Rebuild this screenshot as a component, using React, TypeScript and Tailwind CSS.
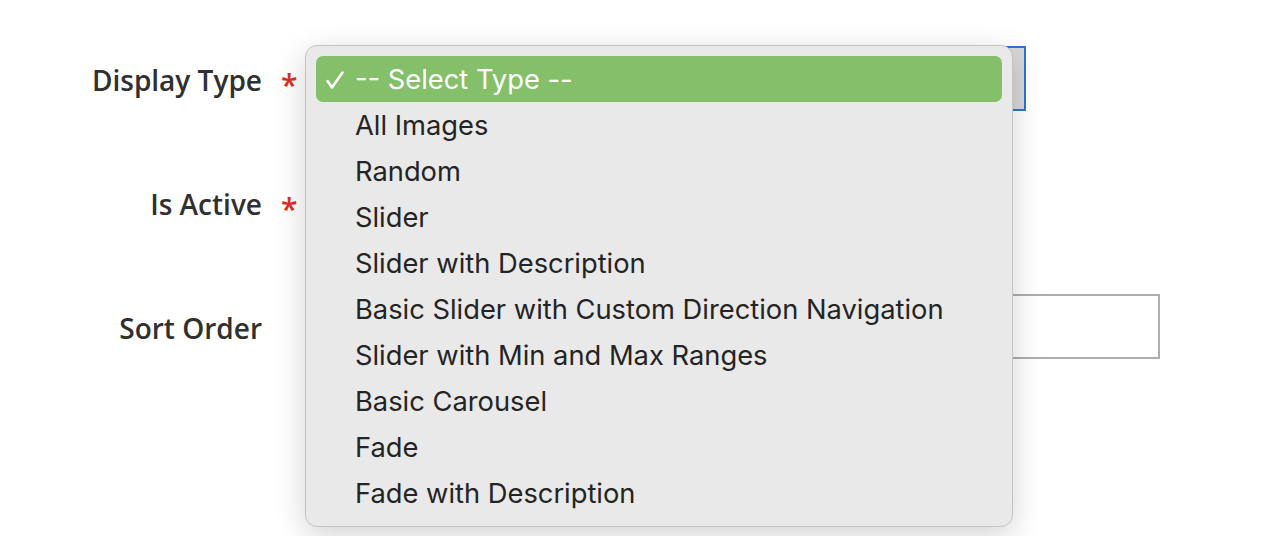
import React from "react";

const items = [
  "All Images",
  "Random",
  "Slider",
  "Slider with Description",
  "Basic Slider with Custom Direction Navigation",
  "Slider with Min and Max Ranges",
  "Basic Carousel",
  "Fade",
  "Fade with Description",
];

function Label({ text, required }: { text: string; required?: boolean }) {
  return (
    <div className="flex items-center w-[316px] shrink-0">
      <div
        className="w-[262px] text-right text-[28px] font-semibold text-[#303030] leading-none mt-[2px]"
        style={{ fontFamily: '"Open Sans", sans-serif' }}
      >
        {text}
      </div>
      {required && (
        <span
          className="ml-[19px] text-[30px] text-[#e02b27] leading-none mt-[12px] font-semibold"
          style={{ fontFamily: '"Open Sans", sans-serif' }}
        >
          *
        </span>
      )}
    </div>
  );
}

export default function App() {
  return (
    <div className="relative w-[1278px] h-[536px] bg-white overflow-hidden">
      <div className="flex flex-col pt-[46px] gap-[59px]">
        <div className="flex items-center h-[65px]">
          <Label text="Display Type" required />
          <div className="w-[710px] h-[65px] border-2 border-[#2f74d0] bg-[#d8d8d8]" />
        </div>
        <div className="flex items-center h-[65px]">
          <Label text="Is Active" required />
        </div>
        <div className="flex items-center h-[65px]">
          <Label text="Sort Order" />
          <div className="w-[844px] h-[65px] border-2 border-[#adadad] bg-white" />
        </div>
      </div>

      <div
        className="absolute left-[305px] top-[45px] w-[708px] h-[482px] rounded-[12px] bg-[#e9e9e9] border border-[#c4c4c4] shadow-[0_8px_30px_rgba(0,0,0,0.18)] px-[10px] pt-[10px]"
        style={{ fontFamily: 'Inter, "Noto Sans", sans-serif' }}
      >
        <div className="flex items-center h-[46px] rounded-[7px] bg-[#84bf6a] text-white text-[27.3px] pt-[3px]">
          <span className="w-[39px] pl-[9px] flex items-center">
            <svg width="20" height="20" viewBox="0 0 20 20" className="-mt-[2px]">
              <polyline
                points="2.5,11 7,17.5 17.5,2.5"
                fill="none"
                stroke="white"
                strokeWidth="2.6"
                strokeLinecap="round"
                strokeLinejoin="round"
              />
            </svg>
          </span>
          <span>-- Select Type --</span>
        </div>
        {items.map((t) => (
          <div key={t} className="flex items-center h-[46px] text-[27.3px] text-[#242424] pt-[3px]">
            <span className="w-[39px]" />
            <span>{t}</span>
          </div>
        ))}
      </div>
    </div>
  );
}
